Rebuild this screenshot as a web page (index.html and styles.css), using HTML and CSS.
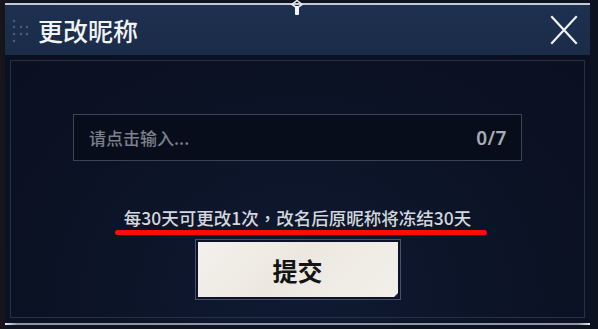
FILE: index.html
```html
<!DOCTYPE html>
<html lang="zh">
<head>
<meta charset="utf-8">
<link rel="stylesheet" href="styles.css">
</head>
<body>
<div class="stage">
  <div class="panel">
    <div class="topline">
      <svg class="ornament" width="14" height="16" viewBox="0 0 14 16">
        <path d="M7 0.5 L12 4.5 L7 8 L2 4.5 Z" fill="none" stroke="#e9edf2" stroke-width="1.6"/>
        <rect x="5" y="6" width="4" height="9" rx="1" fill="#f4f6f9"/>
      </svg>
    </div>
    <div class="header">
      <svg class="grip" width="20" height="24" viewBox="0 0 20 24">
        <g fill="#4d5f7e">
          <circle cx="2" cy="2" r="1.2"/>
          <circle cx="2" cy="8" r="1.2"/>
          <circle cx="2" cy="15" r="1.2"/>
          <circle cx="2" cy="22" r="1.2"/>
          <circle cx="9" cy="8" r="1.2"/>
          <circle cx="9" cy="15" r="1.2"/>
          <circle cx="15" cy="8" r="1.2"/>
          <circle cx="15" cy="15" r="1.2"/>
        </g>
      </svg>
      <h1 class="title">更改昵称</h1>
      <svg class="close" width="28" height="30" viewBox="0 0 28 30">
        <path d="M2 2 L26 28 M26 2 L2 28" stroke="#eef1f5" stroke-width="2.2" stroke-linecap="square"/>
      </svg>
    </div>
    <div class="body">
      <div class="frame">
        <div class="input">
          <span class="placeholder">请点击输入...</span>
          <span class="count">0/7</span>
        </div>
        <p class="hint">每30天可更改1次<span class="comma" lang="zh-TW">，</span>改名后原昵称将冻结30天</p>
        <div class="underline"></div>
        <div class="button">
          <div class="button-face">提交</div>
        </div>
      </div>
    </div>
    <div class="bottomline"></div>
  </div>
</div>
</body>
</html>
```
FILE: styles.css
```css
html, body {
  margin: 0;
  padding: 0;
}
body {
  width: 598px;
  height: 329px;
  overflow: hidden;
  background: linear-gradient(90deg, #1a1618 0px, #101420 6px, #0d1220 100%);
  font-family: "Noto Sans CJK SC", "Noto Sans", sans-serif;
}
.stage {
  padding: 2px 8px 0 5px;
}
.panel {
  width: 585px;
  display: flex;
  flex-direction: column;
}
.topline {
  position: relative;
  height: 2px;
  margin-top: 1px;
  background: #c3cad4;
}
.ornament {
  position: absolute;
  left: 285px;
  top: -3px;
}
.header {
  height: 50px;
  background: linear-gradient(180deg, #1d3050 0%, #1a2c48 100%);
  display: flex;
  align-items: center;
  padding-left: 7px;
  padding-right: 12px;
}
.grip {
  display: block;
  margin-top: 1px;
}
.title {
  margin: 0 0 0 6px;
  font-size: 25px;
  font-weight: 500;
  color: #f1f3f6;
  line-height: 30px;
  letter-spacing: 0;
}
.close {
  display: block;
  margin-left: auto;
}
.body {
  background: radial-gradient(ellipse at 50% 90%, #0f1a33 0%, #0b1224 60%, #0a1020 100%);
  padding: 5px 5px 4px 5px;
}
.frame {
  border: 1px solid #253149;
  height: 256px;
  display: flex;
  flex-direction: column;
  align-items: center;
}
.input {
  margin-top: 53px;
  width: 418px;
  height: 45px;
  border: 1px solid #39445a;
  background: #080d1b;
  display: flex;
  align-items: center;
  justify-content: space-between;
  padding: 0 14px 0 15px;
}
.placeholder {
  font-size: 17px;
  font-weight: 500;
  color: #7b808a;
}
.count {
  font-family: "Noto Sans", "Liberation Sans", sans-serif;
  font-size: 19px;
  font-weight: 600;
  color: #a8acb4;
  letter-spacing: 0.5px;
}
.hint {
  margin: 47px 0 0 0;
  font-size: 17.5px;
  line-height: 20px;
  font-weight: 500;
  color: #d4d7dd;
  white-space: nowrap;
}
.comma {
  font-family: "Noto Sans CJK TC", "Noto Sans CJK SC", sans-serif;
}
.underline {
  margin-top: 2px;
  margin-left: 7px;
  width: 372px;
  height: 5px;
  border-radius: 3px;
  background: #ff0a0a;
}
.button {
  margin-top: 4px;
  border: 1px solid #46536a;
  padding: 2px;
  background: #0c1326;
}
.button-face {
  position: relative;
  width: 200px;
  height: 55px;
  background: linear-gradient(135deg, #f4f1ec 0%, #ece8e1 45%, #f3f0ea 100%);
  display: flex;
  align-items: center;
  justify-content: center;
  font-size: 25px;
  font-weight: 700;
  color: #141414;
  letter-spacing: 0;
}
.button-face::after {
  content: "";
  position: absolute;
  right: 0;
  bottom: 0;
  border-style: solid;
  border-width: 0 0 4px 4px;
  border-color: transparent transparent #1a2233 transparent;
}
.bottomline {
  height: 2px;
  margin-top: 1px;
  background: linear-gradient(90deg, #e8ecf0 0px, #8c96a6 12px, #8c96a6 573px, #e8ecf0 585px);
}
```
